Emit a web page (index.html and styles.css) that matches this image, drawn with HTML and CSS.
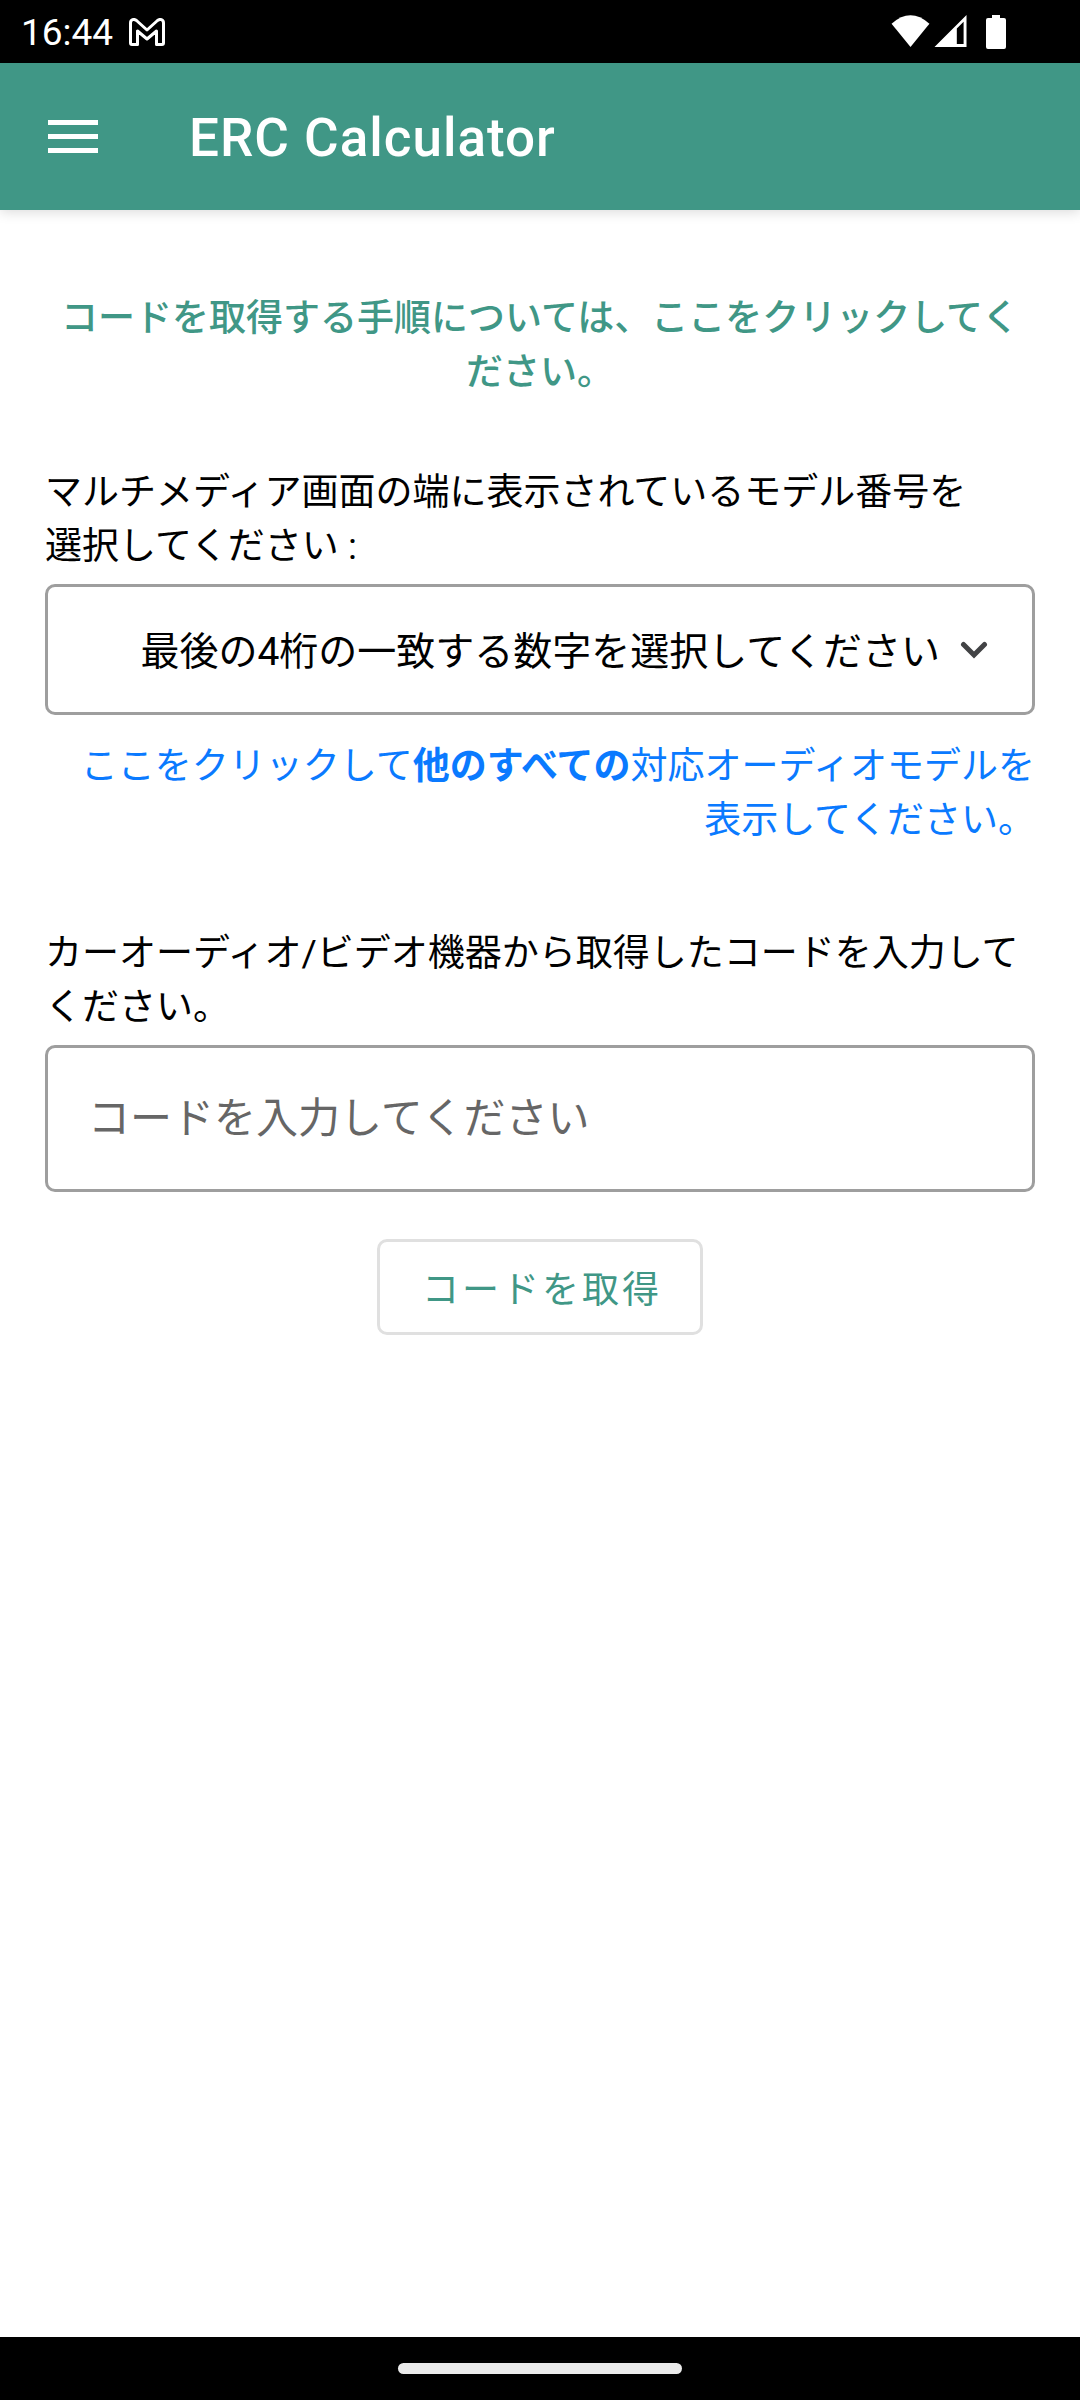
FILE: index.html
```html
<!DOCTYPE html>
<html lang="ja">
<head>
<meta charset="utf-8">
<meta name="viewport" content="width=device-width, initial-scale=1">
<title>ERC Calculator</title>
<link rel="stylesheet" href="styles.css">
</head>
<body>
<div class="status-bar">
  <div class="status-group">
    <span class="clock">16:44</span>
    <svg class="mail-icon" width="36" height="28" viewBox="0 0 36 28" fill="none" stroke="#fff" stroke-width="3" stroke-linejoin="round" aria-hidden="true">
      <path d="M1.500 5C1.500 1.500 5 .5 7.500 2.500L18 12L28.500 2.500C31 .5 34.500 1.500 34.500 5V25Q34.500 26.500 33 26.500H27.500V13L18 21L8.500 13V26.500H3Q1.500 26.500 1.500 25Z"/>
    </svg>
  </div>
  <div class="status-group status-icons">
    <svg width="39" height="33" viewBox="0 0 40 34" fill="#fff" aria-hidden="true"><path d="M.5 9Q20-8.500 39.500 9L20 33Z"/></svg>
    <svg class="signal-icon" width="33" height="33" viewBox="0 0 33 34" aria-hidden="true"><path fill="#fff" fill-rule="evenodd" d="M0 33L33 0V33ZM23 14V30H30V7Z"/></svg>
    <svg class="battery-icon" width="20" height="34" viewBox="0 0 20 34" fill="#fff" aria-hidden="true"><path d="M6 0H14V3H18Q20 3 20 5V32Q20 34 18 34H2Q0 34 0 32V5Q0 3 2 3H6Z"/></svg>
  </div>
</div>

<header class="app-bar">
  <button class="menu-button" type="button" aria-label="メニュー">
    <svg width="50" height="36" viewBox="0 0 50 36" fill="#fff" aria-hidden="true"><path d="M0 1H50V6H0ZM0 15H50V20H0ZM0 29H50V34H0Z"/></svg>
  </button>
  <h1 class="app-title">ERC Calculator</h1>
</header>

<main class="content">
  <a class="help-link" href="#">コードを取得する手順については、ここをクリックしてください。</a>

  <form class="form">
    <label class="label" for="model">マルチメディア画面の端に表示されているモデル番号を<br>選択してください :</label>
    <div class="select-box">
      <select class="select" id="model">
        <option>最後の4桁の一致する数字を選択してください</option>
      </select>
      <svg class="chevron" width="28" height="18" viewBox="0 0 28 18" fill="none" stroke="#424345" stroke-width="5" stroke-linecap="round" aria-hidden="true"><path d="M3.500 3.500L14 14L24.500 3.500"/></svg>
    </div>
    <a class="models-link" href="#">ここをクリックして<b>他のすべての</b>対応オーディオモデルを<br>表示してください。</a>

    <label class="label" for="code">カーオーディオ/ビデオ機器から取得したコードを入力してください。</label>
    <input class="input" id="code" type="text" placeholder="コードを入力してください">
    <button class="submit" type="button">コードを取得</button>
  </form>
</main>

<div class="nav-bar"><div class="nav-handle"></div></div>
</body>
</html>
```

FILE: styles.css
```css
* {
  box-sizing: border-box;
}

body {
  margin: 0;
  min-height: 100vh;
  display: flex;
  flex-direction: column;
  background: #fff;
  color: #000;
  font-family: Roboto, "Noto Sans CJK JP", sans-serif;
  font-size: 37px;
  line-height: 54px;
}

svg {
  display: block;
}

.status-bar {
  height: 63px;
  padding: 0 74px 0 21px;
  display: flex;
  align-items: center;
  justify-content: space-between;
  background: #000;
  color: #fff;
}

.status-group {
  display: flex;
  align-items: center;
  gap: 16px;
}

.status-icons {
  gap: 4px;
}

.clock {
  padding-top: 3px;
}

.battery-icon {
  margin-left: 15px;
}

.app-bar {
  height: 147px;
  padding: 0 48px;
  display: flex;
  align-items: center;
  gap: 91px;
  background: #409786;
  color: #fff;
  box-shadow: 0 2px 12px rgba(0, 0, 0, 0.15);
}

.menu-button {
  padding: 0;
  border: 0;
  background: none;
}

.app-title {
  margin: 0;
  padding-top: 3px;
  font-size: 53px;
  font-weight: 500;
  line-height: 64px;
  letter-spacing: 1px;
}

.content {
  flex: 1;
  padding: 82px 45px;
}

.help-link {
  display: block;
  color: #409786;
  font-weight: 500;
  text-align: center;
  text-decoration: none;
}

.form {
  margin-top: 66px;
  display: flex;
  flex-direction: column;
}

.label {
  margin-bottom: 10px;
}

.select-box {
  display: grid;
  align-items: center;
}

.select,
.chevron {
  grid-area: 1 / 1;
}

.select,
.input {
  width: 100%;
  border: 3px solid #9e9e9e;
  border-radius: 10px;
  background: #fff;
  color: #000;
  font-family: inherit;
}

.select {
  height: 131px;
  padding: 5px 92px 0 42px;
  appearance: none;
  font-size: 39px;
  text-align-last: right;
}

.chevron {
  justify-self: end;
  margin-right: 47px;
  pointer-events: none;
}

.models-link {
  margin: 25px 0 79px;
  color: #0a7aff;
  text-align: right;
  text-decoration: none;
}

.input {
  height: 147px;
  padding: 0 40px;
  font-size: 42px;
}

.input::placeholder {
  color: #666;
  opacity: 1;
}

.submit {
  align-self: center;
  height: 96px;
  margin-top: 47px;
  padding: 0 38px 0 42px;
  border: 3px solid #e0e0e0;
  border-radius: 10px;
  background: #fff;
  color: #409786;
  font-family: inherit;
  font-size: 37px;
  letter-spacing: 3px;
}

.nav-bar {
  height: 63px;
  display: flex;
  align-items: center;
  justify-content: center;
  background: #000;
}

.nav-handle {
  width: 284px;
  height: 11px;
  border-radius: 6px;
  background: #ebebeb;
}
```
